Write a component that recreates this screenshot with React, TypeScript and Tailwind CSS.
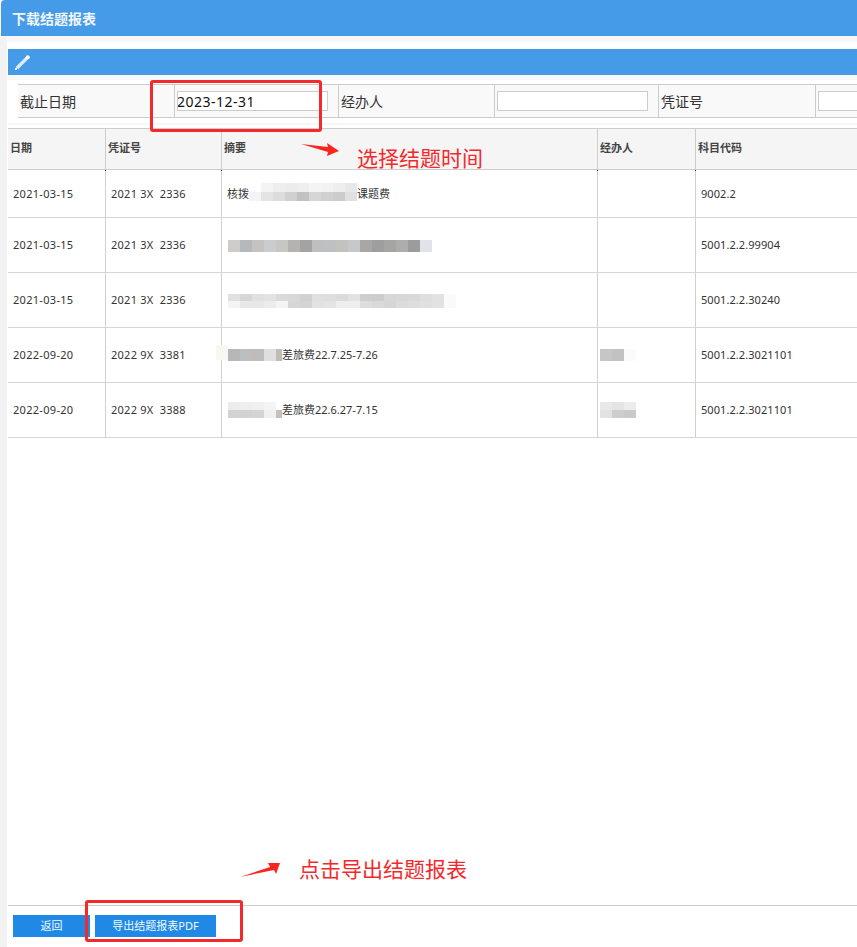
const font = "font-['Noto_Sans','Noto_Sans_CJK_SC',sans-serif]";

const rows = [
  { date: "2021-03-15", voucher: "2021 3X  2336", code: "9002.2", h: "h-[48px]" },
  { date: "2021-03-15", voucher: "2021 3X  2336", code: "5001.2.2.99904", h: "h-[55px]" },
  { date: "2021-03-15", voucher: "2021 3X  2336", code: "5001.2.2.30240", h: "h-[55px]" },
  { date: "2022-09-20", voucher: "2022 9X  3381", code: "5001.2.2.3021101", h: "h-[55px]" },
  { date: "2022-09-20", voucher: "2022 9X  3388", code: "5001.2.2.3021101", h: "h-[55px]" },
];

// mosaic tiles standing in for the blurred text
const Mosaic = ({ tiles, h = "h-[12px]" }: { tiles: string[][]; h?: string }) => (
  <div className="inline-flex flex-col align-middle">
    {tiles.map((line, i) => (
      <div key={i} className="flex">
        {line.map((c, j) => (
          <div key={j} className={`w-[12px] ${h}`} style={{ background: c }} />
        ))}
      </div>
    ))}
  </div>
);

const blur1 = [
  ["#ffffff", "#f4f4f4", "#eeeeee", "#ececec", "#eeeeee", "#f4f4f4", "#f2f2f2", "#eeeeee", "#e8e8e8"],
  ["#f4f4f4", "#e4e4e4", "#dcdcdc", "#d0d0d0", "#c0c2c4", "#d6d6d6", "#d0d0d0", "#cccccc", "#e0e0e0"],
];
const blur2 = [
  ["#d0ccc9", "#b5b9bc", "#c5c3c2", "#cbcccd", "#c8c6c3", "#b5b3b2", "#a3a3a3", "#bfbfbf", "#bfc0c1", "#c4c2bf", "#c6c8ca", "#aaa6a3", "#9e9e9e", "#a5a5a3", "#adadab", "#9c9c9c", "#e0e3e7"],
];
const blur3 = [
  ["#e2e0de", "#d4d6d8", "#e0e0e2", "#e2e2e4", "#dadada", "#d8d8d8", "#d0d2d2", "#e0e0e0", "#dedede", "#dddbd9", "#e0e2e4", "#d0cecc", "#cfcdcb", "#d6d8d8", "#d8d8d8", "#d9d9d7", "#dededc", "#e2e2e2", "#fafafa"],
  ["#f4f4f4", "#e6e8ea", "#e8e8e8", "#ececec", "#f4f4f4", "#d6d6d6", "#d4d4d4", "#e2e2e2", "#e4e4e6", "#eeeeec", "#eceef0", "#dddddd", "#d8dada", "#d6d6d6", "#dcdcdc", "#dededc", "#e0e0e0", "#e2e2e2", "#fafafa"],
];
const blur4 = [["#b7b7b7", "#bcbfc1", "#bfbcb9", "#dfdfdf"]];
const blur5 = [
  ["#ececec", "#eeeeee", "#f0f0f0", "#f4f4f4"],
  ["#d2d2d4", "#d2d2d4", "#d4d4d2", "#f0f0ee"],
];

const summaries = [
  <div className="flex items-center pl-[5px]">
    <span>核拨</span>
    <div className="mb-[5px]"><Mosaic tiles={blur1} h="h-[9px]" /></div>
    <span>课题费</span>
  </div>,
  <div className="pl-[6px]"><Mosaic tiles={blur2} /></div>,
  <div className="pl-[6px]"><Mosaic tiles={blur3} h="h-[7px]" /></div>,
  <div className="flex items-center pl-[6px]">
    <Mosaic tiles={blur4} />
    <div className="w-[6px] h-[12px] bg-[#c0bcb8]" />
    <span>差旅费22.7.25-7.26</span>
  </div>,
  <div className="flex items-center pl-[6px]">
    <Mosaic tiles={blur5} h="h-[8px]" />
    <div className="w-[6px] h-[8px] mt-[8px] bg-[#c4c0bc]" />
    <span>差旅费22.6.27-7.15</span>
  </div>,
];

const cols = "grid grid-cols-[98px_116px_376px_98px_1fr]";

const FormLabel = ({ children, w }: { children: string; w: string }) => (
  <div className={`${w} shrink-0 flex items-center pl-[2px] text-[14px] text-[#333] border-r border-[#cccccc]`}>
    {children}
  </div>
);

const FormInput = ({ value, w }: { value?: string; w: string }) => (
  <div className={`${w} shrink-0 flex items-center pl-[2px] border-r border-[#cccccc]`}>
    <input
      readOnly
      value={value ?? ""}
      className="w-[151px] h-[20px] bg-white border border-[#cccccc] text-[14px] tracking-[0.5px] leading-none text-[#111] px-0 outline-none [text-indent:-1px]"
    />
  </div>
);

export default function App() {
  return (
    <div className={`${font} relative w-[857px] h-[947px] overflow-hidden bg-white flex flex-col`}>
      <div className="h-[36px] shrink-0 bg-[#459be8] rounded-tl-[4px] ml-[1px] flex items-center pl-[11px] text-[14px] font-bold text-[#f0f6fc]">
        下载结题报表
      </div>

      <div className="flex-1 flex min-h-0">
        <div className="w-[7px] shrink-0 bg-[#f2f2f2]" />
        <div className="flex-1 min-w-0 flex flex-col">
          <div className="h-[6px] shrink-0 bg-[#f7f7f7]" />
          <div className="h-[7px] shrink-0" />

          <div className="h-[26px] shrink-0 ml-[1px] bg-[#459be8] flex items-center pl-[7px]">
            <svg width="15" height="15" viewBox="0 0 15 15">
              <path d="M2 13 L12 3" stroke="#cfe5fa" strokeWidth="3.5" />
              <path d="M1.5 13.5 L12 3" stroke="#ffffff" strokeWidth="1.2" strokeDasharray="1.5 1" />
              <circle cx="12.8" cy="2.2" r="2" fill="#ffffff" />
              <rect x="0" y="13" width="2" height="2" fill="#ffffff" />
            </svg>
          </div>

          <div className="h-[5px] shrink-0 bg-[#f8f8f8]" />
          <div className="h-[4px] shrink-0" />
          <div className="h-[34px] shrink-0 ml-[11px] flex bg-[#f9f9f9] border-y border-[#cccccc]">
            <FormLabel w="w-[157px]">截止日期</FormLabel>
            <FormInput w="w-[164px]" value="2023-12-31" />
            <FormLabel w="w-[156px]">经办人</FormLabel>
            <FormInput w="w-[164px]" />
            <FormLabel w="w-[157px]">凭证号</FormLabel>
            <FormInput w="w-[164px]" />
          </div>
          <div className="h-[2px] shrink-0 bg-[#f7f7f7] ml-[1px] mt-[5px]" />
          <div className="h-[3px] shrink-0" />

          <div className="ml-[1px] text-[11px] text-[#333]">
            <div className={`${cols} h-[42px] bg-[#f5f5f5] border-y border-[#cccccc] font-bold text-[#444]`}>
              <div className="flex items-center pl-[2px] pb-[2px] border-r border-[#cccccc]">日期</div>
              <div className="flex items-center pl-[2px] pb-[2px] border-r border-[#cccccc]">凭证号</div>
              <div className="flex items-center pl-[2px] pb-[2px] border-r border-[#cccccc]">摘要</div>
              <div className="flex items-center pl-[2px] pb-[2px] border-r border-[#cccccc]">经办人</div>
              <div className="flex items-center pl-[2px] pb-[2px]">科目代码</div>
            </div>
            {rows.map((r, i) => {
              const pad = i === 0 ? "pt-[2px]" : "";
              return (
                <div key={i} className={`${cols} ${r.h} border-b border-[#d6d6d6]`}>
                  <div className={`relative flex items-center pl-[5px] ${pad} tracking-[0.3px] border-r border-[#d0d0d0]`}>
                    {r.date}
                    {i === 0 && <span className="absolute -right-[1px] top-0 w-[1px] h-[1px] bg-[#333]" />}
                  </div>
                  <div className={`relative flex items-center pl-[5px] ${pad} tracking-[0.25px] whitespace-pre border-r border-[#d0d0d0]`}>
                    {r.voucher}
                    {i === 0 && <span className="absolute -right-[1px] top-0 w-[1px] h-[1px] bg-[#333]" />}
                  </div>
                  <div className={`relative flex items-center ${pad} border-r border-[#d0d0d0]`}>
                    {summaries[i]}
                    {i === 0 && <span className="absolute -right-[1px] top-0 w-[1px] h-[1px] bg-[#333]" />}
                  </div>
                  <div className="relative flex items-center pl-[2px] border-r border-[#d0d0d0]">
                    {i === 3 && <Mosaic tiles={[["#c8c6c4", "#c2c2c4", "#fafbfd"]]} />}
                    {i === 4 && <Mosaic tiles={[["#e8e8e8", "#e4e4e4", "#ececec"], ["#e2e2e4", "#cdcdcd", "#cacaca"]]} h="h-[8px]" />}
                    {i === 0 && <span className="absolute -right-[1px] top-0 w-[1px] h-[1px] bg-[#333]" />}
                  </div>
                  <div className={`flex items-center pl-[5px] ${pad} tracking-[0.07px]`}>{r.code}</div>
                </div>
              );
            })}
          </div>

          <div className="flex-1" />

          <div className="h-[42px] shrink-0 ml-[1px] border-t border-[#cccccc] flex gap-[5px] pt-[9px] pl-[5px]">
            <button className="w-[77px] h-[22px] bg-[#2089e6] text-[11px] text-[#f4f9fe]">返回</button>
            <button className="w-[121px] h-[22px] bg-[#2089e6] text-[11px] text-[#f4f9fe]">导出结题报表PDF</button>
          </div>
        </div>
      </div>

      {/* faint bleed of the blur over the column line */}
      <div className="absolute left-[216px] top-[345px] w-[12px] h-[15px] bg-[#faf7f3]" />

      {/* red annotations drawn over the page */}
      <div className="absolute left-[150px] top-[80px] w-[172px] h-[52px] border-[3px] border-[#f4292b] rounded-[3px]" />
      <div className="absolute left-[85px] top-[900px] w-[158px] h-[42px] border-[3px] border-[#f4292b] rounded-[3px]" />
      <svg className="absolute left-0 top-0" width="857" height="947" fill="#f8261f">
        <polygon points="301,144 328,147 327,143 339,151 327,156 328,152" />
        <polygon points="240,877 270,867 268,863 280,863 276,874 274,870" />
      </svg>
      <div className="absolute left-[357px] top-[144px] text-[21px] leading-[28px] text-[#f4292b]">选择结题时间</div>
      <div className="absolute left-[299px] top-[855px] text-[21px] leading-[28px] text-[#f4292b]">点击导出结题报表</div>
    </div>
  );
}
